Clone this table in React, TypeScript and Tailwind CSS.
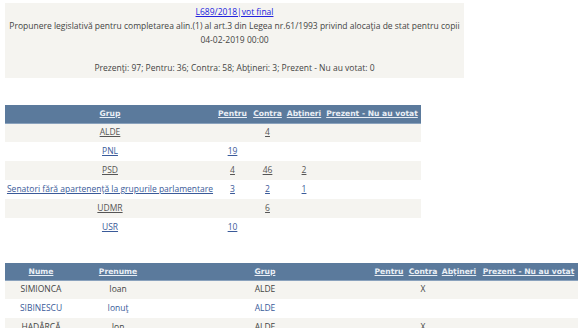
import React from 'react';

type GroupRow = { name: string; pentru?: string; contra?: string; abtineri?: string; prezent?: string };

const groups: GroupRow[] = [
  { name: 'ALDE', contra: '4' },
  { name: 'PNL', pentru: '19' },
  { name: 'PSD', pentru: '4', contra: '46', abtineri: '2' },
  { name: 'Senatori fără apartenenţă la grupurile parlamentare', pentru: '3', contra: '2', abtineri: '1' },
  { name: 'UDMR', contra: '6' },
  { name: 'USR', pentru: '10' },
];

const senators = [
  { nume: 'SIMIONCA', prenume: 'Ioan', grup: 'ALDE', vot: 'contra' },
  { nume: 'SIBINESCU', prenume: 'Ionuţ', grup: 'ALDE', vot: '' },
  { nume: 'HADÂRCĂ', prenume: 'Ion', grup: 'ALDE', vot: 'contra' },
];

const th = "font-['DejaVu_Sans',sans-serif] font-bold text-[7.6px] text-[#e9eef5] underline text-center px-0 whitespace-nowrap";

export default function App() {
  return (
    <div className="w-[580px] h-[328px] overflow-hidden bg-white font-['Open_Sans',sans-serif] text-[8.5px] text-[#444]">
      {/* vote summary */}
      <div className="ml-[5px] mt-[3px] w-[459px] bg-[#f5f4f0] pt-[2px] pb-[3px] text-center leading-[14px]">
        <a href="#" className="text-[#2222dd] underline">L689/2018|vot final</a>
        <div>Propunere legislativă pentru completarea alin.(1) al art.3 din Legea nr.61/1993 privind alocaţia de stat pentru copii</div>
        <div>04-02-2019 00:00</div>
        <div>&nbsp;</div>
        <div>Prezenţi: 97; Pentru: 36; Contra: 58; Abţineri: 3; Prezent - Nu au votat: 0</div>
      </div>

      {/* results per group */}
      <table className="ml-[5px] mt-[27px] table-fixed border-collapse w-[416px]">
        <thead>
          <tr className="h-[18px] bg-[#5b7a9c] border-b border-[#8aa2bd]">
            <th className={`${th} w-[210px]`}>Grup</th>
            <th className={`${th} w-[35px]`}>Pentru</th>
            <th className={`${th} w-[35px]`}>Contra</th>
            <th className={`${th} w-[38px]`}>Abţineri</th>
            <th className={th}>Prezent - Nu au votat</th>
          </tr>
        </thead>
        <tbody>
          {groups.map((g, i) => {
            const link = i % 2 === 0 ? 'text-[#555] bg-[#f5f4f0]' : 'text-[#3a5a99] bg-white';
            return (
              <tr key={g.name} className={`h-[19px] ${link}`}>
                <td className="text-center whitespace-nowrap underline">{g.name}</td>
                <td className="text-center underline">{g.pentru}</td>
                <td className="text-center underline">{g.contra}</td>
                <td className="text-center underline">{g.abtineri}</td>
                <td className="text-center underline">{g.prezent}</td>
              </tr>
            );
          })}
        </tbody>
      </table>

      {/* individual votes */}
      <table className="ml-[5px] mt-[26px] table-fixed border-collapse w-[573px]">
        <thead>
          <tr className="h-[17px] bg-[#5b7a9c] border-b border-[#8aa2bd]">
            <th className={`${th} w-[72px]`}>Nume</th>
            <th className={`${th} w-[82px]`}>Prenume</th>
            <th className={`${th} w-[212px]`}>Grup</th>
            <th className={`${th} w-[36px]`}>Pentru</th>
            <th className={`${th} w-[32px]`}>Contra</th>
            <th className={`${th} w-[40px]`}>Abţineri</th>
            <th className={th}>Prezent - Nu au votat</th>
          </tr>
        </thead>
        <tbody>
          {senators.map((s, i) => {
            const row = i % 2 === 0 ? 'text-[#444] bg-[#f5f4f0]' : 'text-[#3a5a99] bg-white';
            return (
              <tr key={s.nume} className={`h-[19px] ${row}`}>
                <td className="text-center">{s.nume}</td>
                <td className="text-center">{s.prenume}</td>
                <td className="text-center">{s.grup}</td>
                <td className="text-center">{s.vot === 'pentru' ? 'X' : ''}</td>
                <td className="text-center">{s.vot === 'contra' ? 'X' : ''}</td>
                <td className="text-center">{s.vot === 'abtineri' ? 'X' : ''}</td>
                <td className="text-center"></td>
              </tr>
            );
          })}
        </tbody>
      </table>
    </div>
  );
}
